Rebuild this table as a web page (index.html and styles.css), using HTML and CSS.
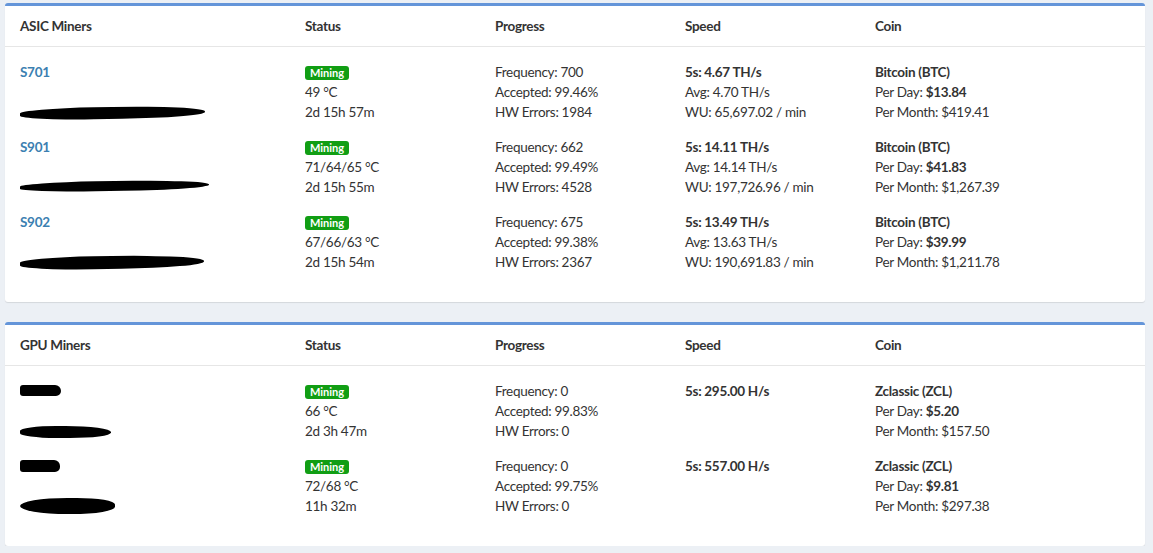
FILE: index.html
```html
<!DOCTYPE html>
<html lang="en">
<head>
    <meta charset="UTF-8">
    <title>Miners</title>
    <link rel="stylesheet" href="styles.css">
</head>
<body>
    <div class="content">

        <!-- ASIC miners -->
        <div class="box">
            <div class="row head">
                <div>ASIC Miners</div>
                <div>Status</div>
                <div>Progress</div>
                <div>Speed</div>
                <div>Coin</div>
            </div>

            <div class="row">
                <div class="name">
                    <a href="#">S701</a>
                    <span></span>
                    <span class="redact r1"></span>
                </div>
                <div>
                    <span class="label">Mining</span>
                    <span>49 °C</span>
                    <span>2d 15h 57m</span>
                </div>
                <div>
                    <span>Frequency: 700</span>
                    <span>Accepted: 99.46%</span>
                    <span>HW Errors: 1984</span>
                </div>
                <div>
                    <b>5s: 4.67 TH/s</b>
                    <span>Avg: 4.70 TH/s</span>
                    <span>WU: 65,697.02 / min</span>
                </div>
                <div>
                    <b>Bitcoin (BTC)</b>
                    <span>Per Day: <b>$13.84</b></span>
                    <span>Per Month: $419.41</span>
                </div>
            </div>

            <div class="row">
                <div class="name">
                    <a href="#">S901</a>
                    <span></span>
                    <span class="redact r2"></span>
                </div>
                <div>
                    <span class="label">Mining</span>
                    <span>71/64/65 °C</span>
                    <span>2d 15h 55m</span>
                </div>
                <div>
                    <span>Frequency: 662</span>
                    <span>Accepted: 99.49%</span>
                    <span>HW Errors: 4528</span>
                </div>
                <div>
                    <b>5s: 14.11 TH/s</b>
                    <span>Avg: 14.14 TH/s</span>
                    <span>WU: 197,726.96 / min</span>
                </div>
                <div>
                    <b>Bitcoin (BTC)</b>
                    <span>Per Day: <b>$41.83</b></span>
                    <span>Per Month: $1,267.39</span>
                </div>
            </div>

            <div class="row">
                <div class="name">
                    <a href="#">S902</a>
                    <span></span>
                    <span class="redact r3"></span>
                </div>
                <div>
                    <span class="label">Mining</span>
                    <span>67/66/63 °C</span>
                    <span>2d 15h 54m</span>
                </div>
                <div>
                    <span>Frequency: 675</span>
                    <span>Accepted: 99.38%</span>
                    <span>HW Errors: 2367</span>
                </div>
                <div>
                    <b>5s: 13.49 TH/s</b>
                    <span>Avg: 13.63 TH/s</span>
                    <span>WU: 190,691.83 / min</span>
                </div>
                <div>
                    <b>Bitcoin (BTC)</b>
                    <span>Per Day: <b>$39.99</b></span>
                    <span>Per Month: $1,211.78</span>
                </div>
            </div>
        </div>

        <!-- GPU miners -->
        <div class="box">
            <div class="row head">
                <div>GPU Miners</div>
                <div>Status</div>
                <div>Progress</div>
                <div>Speed</div>
                <div>Coin</div>
            </div>

            <div class="row">
                <div class="name">
                    <span class="redact g1"></span>
                    <span></span>
                    <span class="redact g2"></span>
                </div>
                <div>
                    <span class="label">Mining</span>
                    <span>66 °C</span>
                    <span>2d 3h 47m</span>
                </div>
                <div>
                    <span>Frequency: 0</span>
                    <span>Accepted: 99.83%</span>
                    <span>HW Errors: 0</span>
                </div>
                <div>
                    <b>5s: 295.00 H/s</b>
                </div>
                <div>
                    <b>Zclassic (ZCL)</b>
                    <span>Per Day: <b>$5.20</b></span>
                    <span>Per Month: $157.50</span>
                </div>
            </div>

            <div class="row">
                <div class="name">
                    <span class="redact g3"></span>
                    <span></span>
                    <span class="redact g4"></span>
                </div>
                <div>
                    <span class="label">Mining</span>
                    <span>72/68 °C</span>
                    <span>11h 32m</span>
                </div>
                <div>
                    <span>Frequency: 0</span>
                    <span>Accepted: 99.75%</span>
                    <span>HW Errors: 0</span>
                </div>
                <div>
                    <b>5s: 557.00 H/s</b>
                </div>
                <div>
                    <b>Zclassic (ZCL)</b>
                    <span>Per Day: <b>$9.81</b></span>
                    <span>Per Month: $297.38</span>
                </div>
            </div>
        </div>

    </div>
</body>
</html>
```

FILE: styles.css
```css
body {
    font-family: 'Lato', sans-serif;
    font-size: 13.5px;
    letter-spacing: -0.3px;
    line-height: 20px;
    margin: 0;
    padding: 0;
    background-color: #ecf0f5;
    color: #333;
}

.content {
    padding: 3px 8px 0 5px;
    display: flex;
    flex-direction: column;
    gap: 20px;
}

.box {
    background: #fff;
    border-top: 3px solid #6495d9;
    border-radius: 3px;
    box-shadow: 0 1px 1px rgba(0, 0, 0, 0.1);
    padding-bottom: 30px;
}

.row {
    display: grid;
    grid-template-columns: 285px 190px 190px 190px 1fr;
    padding: 15px 0 0 15px;
}

.row > div {
    display: flex;
    flex-direction: column;
    align-items: flex-start;
}

.row span,
.row b,
.row a {
    height: 20px;
}

.row.head {
    padding: 10px 0 10px 15px;
    border-bottom: 1px solid #e6e6e6;
    font-weight: 700;
}

b {
    font-weight: 700;
}

.name a {
    color: #3c7fb1;
    font-weight: 700;
    text-decoration: none;
}

/* Status badge */
.label {
    box-sizing: border-box;
    margin-top: 4px;
    height: 14px !important;
    margin-bottom: 2px;
    padding: 0 5px;
    background-color: #119e14;
    color: #fff;
    border-radius: 3px;
    font-size: 11px;
    font-weight: 700;
    letter-spacing: 0;
    line-height: 14px;
}

/* Redacted names */
.redact {
    display: block;
    background: #000;
    border-radius: 40% 50% 45% 40%;
}

.redact.r1 { width: 185px; height: 12px !important; margin-top: 5px; transform: skewY(-1deg); }
.redact.r2 { width: 189px; height: 10px !important; margin-top: 4px; transform: skewY(-1deg); }
.redact.r3 { width: 184px; height: 13px !important; margin-top: 4px; transform: skewY(-1deg); }
.redact.g1 { width: 41px; height: 11px !important; margin-top: 4px; margin-bottom: 5px; border-radius: 3px 6px 5px 3px; }
.redact.g2 { width: 91px; height: 12px !important; margin-top: 5px; }
.redact.g3 { width: 40px; height: 12px !important; margin-top: 4px; margin-bottom: 4px; border-radius: 3px 6px 5px 3px; }
.redact.g4 { width: 95px; height: 16px !important; margin-top: 2px; border-radius: 50% 40% 45% 50%; }
```
